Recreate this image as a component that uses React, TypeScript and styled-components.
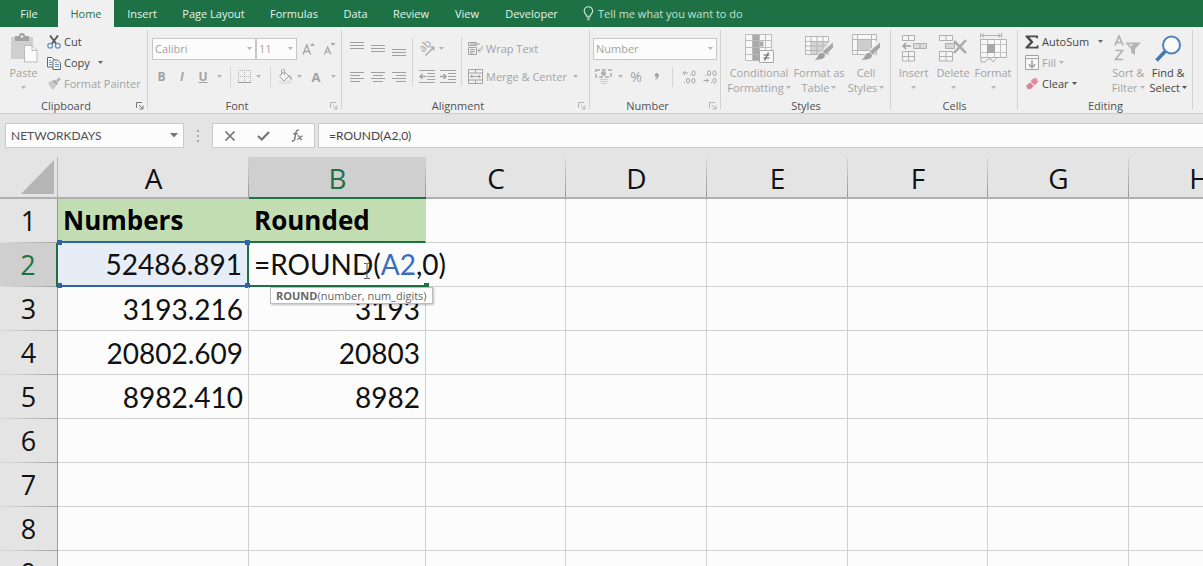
import React from "react";
import styled, { createGlobalStyle, css } from "styled-components";

const UI_FONT = '"Open Sans", "Noto Sans", sans-serif';
const CELL_FONT = 'Lato, "Open Sans", sans-serif';
const GREEN = "#1e7145";
const DIM = "#a3a3a3";
const INK = "#444444";
const LINE = "#d0d0d0";

const GlobalStyle = createGlobalStyle`
  * { box-sizing: border-box; }
  html, body { margin: 0; height: 100%; }
  body { overflow: hidden; background: #fcfcfc; font-family: ${UI_FONT}; font-size: 11px; color: ${INK}; }
  button, input, select { font: inherit; color: inherit; }
  button { border: 0; padding: 0; background: none; }
  svg { display: block; flex: none; }
`;

const Window = styled.div`
  display: flex;
  flex-direction: column;
  height: 100vh;
  overflow: hidden;
`;

/* ---------- tab strip ---------- */

const TabStrip = styled.nav`
  display: flex;
  align-items: stretch;
  flex: none;
  height: 27px;
  background: ${GREEN};
  color: #e4f3ea;
`;

const Tab = styled.button<{ $width: number; $active?: boolean }>`
  flex: none;
  width: ${(p) => p.$width}px;
  line-height: 26px;
  white-space: nowrap;
  ${(p) =>
    p.$active &&
    css`
      background: #f0f0f0;
      color: ${GREEN};
    `}
`;

const TellMe = styled.button`
  display: flex;
  align-items: center;
  gap: 4px;
  padding-left: 12px;
  line-height: 26px;
  color: #c4e2d0;
  white-space: nowrap;
`;

/* ---------- ribbon ---------- */

const RibbonBar = styled.div`
  display: flex;
  flex: none;
  background: #f0f0f0;
  border-bottom: 1px solid #cfcfcf;
`;

const Group = styled.section<{ $width: number }>`
  position: relative;
  display: flex;
  flex-direction: column;
  flex: none;
  width: ${(p) => p.$width}px;
  padding-top: 4px;
  &::after {
    content: "";
    position: absolute;
    right: 0;
    top: 3px;
    bottom: 4px;
    width: 1px;
    background: #d2d2d2;
  }
`;

const GroupBody = styled.div<{ $left: number; $gap?: number }>`
  display: flex;
  align-items: flex-start;
  gap: ${(p) => p.$gap ?? 0}px;
  height: 67px;
  padding-left: ${(p) => p.$left}px;
`;

const GroupFooter = styled.div`
  display: flex;
  align-items: center;
  height: 15px;
  line-height: 15px;
  text-align: center;
  color: #505050;
`;

const Launcher = styled.button<{ $dim?: boolean }>`
  flex: none;
  width: 16px;
  padding-left: 4px;
  color: ${(p) => (p.$dim ? "#b4b4b4" : "#777")};
`;

const FooterName = styled.span`
  flex: 1;
`;

const BigButton = styled.button<{ $width: number; $live?: boolean }>`
  display: flex;
  flex-direction: column;
  align-items: center;
  flex: none;
  width: ${(p) => p.$width}px;
  line-height: 15px;
  white-space: nowrap;
  color: ${(p) => (p.$live ? INK : DIM)};
`;

const BigIcon = styled.span`
  display: flex;
  align-items: center;
  justify-content: center;
  height: 34px;
`;

const BigLine = styled.span`
  display: flex;
  align-items: center;
  justify-content: center;
  gap: 2px;
  height: 15px;
`;

const Stack = styled.div`
  display: flex;
  flex-direction: column;
  flex: none;
`;

const RowButton = styled.button<{ $live?: boolean }>`
  display: flex;
  align-items: center;
  gap: 3px;
  height: 21px;
  white-space: nowrap;
  color: ${(p) => (p.$live ? INK : DIM)};
`;

const ToolRows = styled.div<{ $left?: number }>`
  display: flex;
  flex-direction: column;
  gap: 7px;
  padding: 7px 0 0 ${(p) => p.$left ?? 0}px;
`;

const ToolRow = styled.div`
  display: flex;
  align-items: center;
  height: 21px;
`;

const Tool = styled.button<{ $width?: number; $bold?: boolean; $italic?: boolean; $under?: boolean; $size?: number }>`
  display: flex;
  align-items: center;
  justify-content: center;
  flex: none;
  width: ${(p) => p.$width ?? 21}px;
  height: 21px;
  color: ${DIM};
  font-size: ${(p) => p.$size ?? 12}px;
  font-weight: ${(p) => (p.$bold ? 700 : 400)};
  font-style: ${(p) => (p.$italic ? "italic" : "normal")};
  text-decoration: ${(p) => (p.$under ? "underline" : "none")};
`;

const RowDivider = styled.span<{ $tall?: boolean }>`
  flex: none;
  width: 1px;
  height: ${(p) => (p.$tall ? 49 : 20)}px;
  margin: ${(p) => (p.$tall ? "6px 3px 0" : "0 6px 0 5px")};
  background: #d6d6d6;
`;

const SelectFrame = styled.label<{ $width: number }>`
  position: relative;
  display: block;
  flex: none;
  width: ${(p) => p.$width}px;
  height: 22px;
  color: ${DIM};
  select {
    width: 100%;
    height: 22px;
    padding: 0 2px;
    border: 1px solid #c6c6c6;
    border-radius: 0;
    background: #fcfcfc;
    appearance: none;
  }
  svg {
    position: absolute;
    right: 4px;
    top: 9px;
  }
`;

/* ---------- formula bar ---------- */

const FormulaBar = styled.div`
  display: flex;
  align-items: center;
  flex: none;
  height: 43px;
  padding-left: 5px;
  background: #e4e4e4;
  font-family: ${CELL_FONT};
  font-size: 12px;
`;

const NameBox = styled.div`
  display: flex;
  align-items: center;
  width: 179px;
  height: 25px;
  padding-right: 5px;
  border: 1px solid #cacaca;
  background: #fcfcfc;
  color: #505050;
  input {
    flex: 1;
    min-width: 0;
    padding: 0 0 0 5px;
    border: 0;
    background: none;
    outline: none;
  }
`;

const Grip = styled.span`
  display: flex;
  justify-content: center;
  width: 28px;
`;

const EntryButtons = styled.div`
  display: flex;
  align-items: center;
  justify-content: space-around;
  width: 103px;
  height: 25px;
  margin-right: 3px;
  border: 1px solid #cacaca;
  background: #fcfcfc;
  color: #777;
`;

const FormulaInput = styled.input`
  flex: 1;
  min-width: 0;
  height: 25px;
  padding: 0 10px;
  border: 1px solid #cacaca;
  border-right: 0;
  background: #fcfcfc;
  outline: none;
`;

/* ---------- sheet ---------- */

const SheetArea = styled.main`
  flex: 1;
  min-height: 0;
  overflow: hidden;
`;

const Grid = styled.table`
  width: 100%;
  table-layout: fixed;
  border-collapse: separate;
  border-spacing: 0;
  font-family: ${CELL_FONT};
  font-size: 28px;
  line-height: 36px;
  color: #111;
`;

const Corner = styled.td`
  width: 58px;
  height: 42px;
  padding: 0 0 0 21px;
  border-bottom: 2px solid #b0b0b0;
  border-right: 1px solid #b5b5b5;
  background: #e4e4e4;
`;

const ColumnHead = styled.th<{ $width: number; $active?: boolean }>`
  width: ${(p) => p.$width}px;
  height: 42px;
  padding: 2px 0 0;
  border-bottom: 2px solid ${(p) => (p.$active ? GREEN : "#b0b0b0")};
  background: linear-gradient(to bottom, #dadada, #959595) right / 1px 100% no-repeat
    ${(p) => (p.$active ? "#cfcfcf" : "#e4e4e4")};
  color: ${(p) => (p.$active ? GREEN : "#111")};
  font-family: ${UI_FONT};
  font-weight: 400;
`;

const RowHead = styled.th<{ $active?: boolean }>`
  height: 44px;
  padding: 0;
  border-right: ${(p) => (p.$active ? `2px solid ${GREEN}` : "1px solid #9a9a9a")};
  background: linear-gradient(to right, #dcdcdc, #a4a4a4) bottom / 100% 1px no-repeat
    ${(p) => (p.$active ? "#cfcfcf" : "#e4e4e4")};
  color: ${(p) => (p.$active ? GREEN : "#111")};
  font-family: ${UI_FONT};
  font-size: 27px;
  font-weight: 400;
`;

type CellKind = "plain" | "heading" | "referenced" | "editing";

const Cell = styled.td<{ $kind: CellKind; $edge?: string }>`
  position: relative;
  height: 44px;
  padding: 0 5px;
  border-right: 1px solid ${LINE};
  border-bottom: 1px solid ${LINE};
  text-align: right;
  white-space: nowrap;
  ${(p) =>
    p.$kind === "heading" &&
    css`
      background: #c3ddb3;
      border-right-color: #c3ddb3;
      border-bottom: 2px solid ${p.$edge};
      text-align: left;
      font-family: ${UI_FONT};
      font-size: 26px;
      font-weight: 700;
      color: #000;
    `}
  ${(p) =>
    p.$kind === "referenced" &&
    css`
      background: #e6edf7;
      border-right: 2px solid ${GREEN};
      border-bottom: 2px solid #2f62a8;
    `}
  ${(p) =>
    p.$kind === "editing" &&
    css`
      z-index: 2;
      border-right: 0;
      border-bottom: 2px solid ${GREEN};
      text-align: left;
    `}
`;

const Reference = styled.span`
  color: #3a6cc0;
`;

const Handle = styled.span<{ $corner: "tl" | "tr" | "bl" | "br"; $green?: boolean }>`
  position: absolute;
  width: 5px;
  height: 5px;
  background: ${(p) => (p.$green ? GREEN : "#2f62a8")};
  ${(p) => (p.$corner[0] === "t" ? "top: -3px;" : "bottom: -3px;")}
  ${(p) => (p.$corner[1] === "l" ? "left: -1px;" : "right: -3px;")}
`;

const FunctionHint = styled.div`
  position: absolute;
  left: 21px;
  top: 44px;
  padding: 0 5px;
  border: 1px solid #bdbdbd;
  background: #fff;
  box-shadow: 1px 1px 2px rgba(0, 0, 0, 0.25);
  font-family: ${UI_FONT};
  font-size: 11px;
  line-height: 15px;
  color: #666;
`;

const Pointer = styled.svg`
  position: absolute;
  left: 114px;
  top: 20px;
`;

/* ---------- drawings ---------- */

const Caret = ({ color = "#b4b4b4" }: { color?: string }) => (
  <svg width="5" height="3" viewBox="0 0 5 3">
    <path d="M0 0h5L2.5 3z" fill={color} />
  </svg>
);

const Lines = ({ rows, top = 0 }: { rows: [number, number][]; top?: number }) => (
  <svg width="14" height="16" viewBox="0 0 14 16">
    {rows.map(([x, w], i) => (
      <rect key={i} x={x} y={top + i * 3} width={w} height="1" fill="#a0a0a0" />
    ))}
  </svg>
);

const BulbIcon = () => (
  <svg width="11" height="15" viewBox="0 0 11 15" fill="none" stroke="#d5ebdd" strokeWidth="1.1">
    <path d="M3.6 10.2C3.6 8.4 1.2 7.6 1.2 4.9a4.2 4.2 0 0 1 8.4 0c0 2.7-2.4 3.5-2.4 5.3z" />
    <path d="M3.8 12h3.2M4.3 13.8h2.2" />
  </svg>
);

const PasteIcon = () => (
  <svg width="28" height="30" viewBox="0 0 28 30">
    <path d="M1 4h22v22H1z" fill="#cfcfd0" />
    <path d="M5 3h4a3 3 0 0 1 6 0h4v5H5z" fill="#a2a2a2" />
    <circle cx="12" cy="3.5" r="1.3" fill="#f0f0f0" />
    <path d="M14.5 12.5h7.5l5 5v11.5H14.5z" fill="#fbfbfb" stroke="#bcbcbc" />
    <path d="M22 12.5v5h5" fill="none" stroke="#bcbcbc" />
  </svg>
);

const CutIcon = () => (
  <svg width="14" height="14" viewBox="0 0 14 14" fill="none">
    <path d="M3 0.5 9.3 9M11 0.5 4.7 9" stroke="#5c5c5c" strokeWidth="2" />
    <circle cx="3.2" cy="10.7" r="2.4" stroke="#5f95c6" strokeWidth="1.3" />
    <circle cx="10.8" cy="10.7" r="2.4" stroke="#5f95c6" strokeWidth="1.3" />
  </svg>
);

const CopyIcon = () => (
  <svg width="14" height="14" viewBox="0 0 14 14" fill="#fafafa" stroke="#666">
    <path d="M0.5 1.5h4.5l2 2v7.5H0.5z" />
    <path d="M2 4.5h2M2 6.5h3M2 8.5h3" stroke="#6b98c4" />
    <path d="M6 4h4.5l3 3v6.5H6z" />
    <path d="M8 8.5h4M8 10.5h4M8 6.5h2" stroke="#6b98c4" />
  </svg>
);

const PainterIcon = () => (
  <svg width="14" height="14" viewBox="0 0 14 14">
    <path d="M1 5.5 5 3.5l4.5 5L6.5 12.5 4 11.5z" fill="#c9c9c9" />
    <path d="m5.5 4 2-1.5L11 6.5 9.5 8z" fill="#a5a5a5" />
    <path d="m9 3.5 3-3 1.7 1.8-3.1 3z" fill="#b0b0b0" />
  </svg>
);

const LauncherIcon = () => (
  <svg width="8" height="8" viewBox="0 0 8 8" fill="none" stroke="currentColor">
    <path d="M0.5 6V0.5H6M3 3l3.5 3.5M7 3.5V7H3.5" />
  </svg>
);

const GrowFontIcon = ({ down }: { down?: boolean }) => (
  <svg width="14" height="14" viewBox="0 0 14 14" fill="none" stroke="#a3a3a3">
    {down ? (
      <>
        <path d="m1.5 12.5 3.2-7.5 3.2 7.5M2.6 10h4.2" strokeWidth="1.2" />
        <path d="M7.5 1h5L10 3.8z" fill="#a3a3a3" stroke="none" />
      </>
    ) : (
      <>
        <path d="m1 12.5 3.8-9.5 3.8 9.5M2.3 9.5h5" strokeWidth="1.3" />
        <path d="M8 3.8h5L10.5 1z" fill="#a3a3a3" stroke="none" />
      </>
    )}
  </svg>
);

const BordersIcon = () => (
  <svg width="13" height="13" viewBox="0 0 13 13" fill="none" stroke="#b0b0b0">
    <path d="M0.5 0v12M12.5 0v12M6.5 0v12M0 0.5h13M0 6.5h13" strokeDasharray="1 1" />
    <path d="M0 12.5h13" stroke="#999" />
  </svg>
);

const FillColorIcon = () => (
  <svg width="15" height="15" viewBox="0 0 15 15">
    <path d="M1 11.5h12V15H1z" fill="#e2e2e2" />
    <path d="m6 2.5 5 4.5-5 5-4.5-4.5z" fill="#f4f4f4" stroke="#a3a3a3" />
    <path d="M6.5 6V1.5a1.5 1.5 0 0 0-3 0V5" fill="none" stroke="#a3a3a3" />
    <path d="M11 6c2.5 1 3 3 2.5 5-1-.5-2-2-2.5-5z" fill="#a0a0a0" />
  </svg>
);

const OrientationIcon = () => (
  <svg width="16" height="16" viewBox="0 0 16 16" fill="none" stroke="#a3a3a3">
    <text x="0" y="0" transform="translate(4 12) rotate(-45)" fontSize="11" fill="#a3a3a3" stroke="none">
      ab
    </text>
    <path d="m6.5 14.500 8-8M11 6h3.800v3.800" strokeWidth="1.200" />
  </svg>
);

const IndentIcon = ({ right }: { right?: boolean }) => (
  <svg width="16" height="13" viewBox="0 0 16 13" fill="none" stroke="#a3a3a3">
    <path d="M0 0.5h16M8 3.5h8M8 6.5h8M8 9.5h8M0 12.5h16" />
    <path d={right ? "M0 6.5h6M3.5 4 6 6.5 3.5 9" : "M7 6.5H1M3.5 4 1 6.5 3.5 9"} strokeWidth="1.5" />
  </svg>
);

const WrapIcon = () => (
  <svg width="15" height="15" viewBox="0 0 15 15" fill="none" stroke="#a3a3a3">
    <path d="M0.5 1v3.5h8M0.5 1.5h8v3M2 3h10M0.5 6.5h8v7h-8zM2 8.5h5M2 10.5h5M2 12h3" />
    <path d="M14 5v2.5c0 1.5-1 2-4 2M12 7.5 10 9.5l2 2" />
  </svg>
);

const MergeIcon = () => (
  <svg width="15" height="15" viewBox="0 0 15 15" fill="none" stroke="#a3a3a3">
    <path d="M0.5 0.5h14v14H0.5zM0.5 4h14M0.5 11h14M7.5 0.5V4M7.5 11v3.5M2.5 7.5h10M4.5 5.8 2.5 7.5l2 1.7M10.5 5.8l2 1.7-2 1.7" />
  </svg>
);

const CurrencyIcon = () => (
  <svg width="17" height="15" viewBox="0 0 17 15" fill="none" stroke="#ababab">
    <path d="M1 1h15v7H1z" strokeDasharray="4 2" strokeWidth="1.5" />
    <circle cx="8.5" cy="4.5" r="2" fill="#b5b5b5" />
    <path d="M5 10.5h8M5 12.5h8M6 14.5h6" stroke="#cdcdcd" />
  </svg>
);

const DecimalIcon = ({ less }: { less?: boolean }) => (
  <svg width="15" height="14" viewBox="0 0 15 14" fill="none" stroke="#a3a3a3">
    {less ? (
      <>
        <rect x="4.5" y="1" width="3" height="4.5" rx="1.5" />
        <rect x="10" y="1" width="3" height="4.5" rx="1.5" />
        <rect x="10" y="8.5" width="3" height="4.5" rx="1.5" />
        <path d="M0.5 10.5h5M3.5 8.5l2 2-2 2M2 5.5h1M8 12.5h1" />
      </>
    ) : (
      <>
        <rect x="10" y="1" width="3" height="4.5" rx="1.5" />
        <rect x="4.5" y="8.5" width="3" height="4.5" rx="1.5" />
        <rect x="10" y="8.5" width="3" height="4.5" rx="1.5" />
        <path d="M6 3H1M3 1 1 3l2 2M8 5.5h1M2 12.5h1" />
      </>
    )}
  </svg>
);

const Brush = () => (
  <>
    <path d="m27.5 9-9 11" stroke="#f0f0f0" strokeWidth="6" />
    <path d="M28 8.5v5L20.5 21 17 18z" fill="#a6a6a6" />
    <path d="M17 18.5c2 0 3.5 1.5 3.5 3.5-1.5 4-6.5 4.5-12.5 4 3-1 4-3 5-5 .8-1.5 2-2.5 4-2.5z" fill="#a0a0a0" stroke="#f0f0f0" />
  </>
);

const ConditionalIcon = () => (
  <svg width="29" height="29" viewBox="0 0 29 29" fill="none">
    <path d="M0.5 0.5h26v26h-26z" fill="#f8f8f8" />
    <path d="M8 1h6v25H8zM14 7.5h4.5v5H14z" fill="#a9a9a9" />
    <path d="M0.5 0.5h26v26h-26zM0.5 6.5h26M0.5 13.5h26M0.5 20.5h26M7.5 0v26M14.5 0v26M20.5 0v26" stroke="#bcbcbc" />
    <path d="M14.5 16.5h14v12h-14z" fill="#f8f8f8" stroke="#a8a8a8" />
    <path d="M18.5 21h6M18.5 24h6M23.5 18.5l-4 8" stroke="#666" strokeWidth="1.2" />
  </svg>
);

const FormatTableIcon = () => (
  <svg width="29" height="29" viewBox="0 0 29 29" fill="none">
    <path d="M0.5 2.5h23v18h-23z" fill="#f8f8f8" />
    <path d="M6 8h17v12H6z" fill="#d4d4d4" />
    <path d="M0.5 2.5h23v18h-23zM0.5 7.5h23M0.5 12h23M0.5 16.5h23M6 2.5v18M12 2.5v18M18 2.5v18" stroke="#b6b6b6" />
    <Brush />
  </svg>
);

const CellStylesIcon = () => (
  <svg width="29" height="29" viewBox="0 0 29 29" fill="none">
    <path d="M0.5 0.5h24v20h-24z" fill="#f8f8f8" stroke="#b6b6b6" />
    <path d="M0.5 5.5h24M0.5 16.5h24M5.5 0.5v20M19.5 0.5v20" stroke="#b6b6b6" />
    <path d="M6 6h13v10H6z" fill="#cecece" />
    <Brush />
  </svg>
);

const InsertIcon = () => (
  <svg width="26" height="27" viewBox="0 0 26 27" fill="#f5f5f5" stroke="#b0b0b0">
    <path d="M1.5 0.5h12v5h-12zM7.5 0.5v5" />
    <path d="M12.5 8.5h13v5h-13zM19 8.5v5" fill="#dadada" />
    <path d="M10 11H2M5 8l-3 3 3 3" fill="none" stroke="#9f9f9f" strokeWidth="1.5" />
    <path d="M1.5 16.5h12v9.5h-12zM7.5 16.5v9.5M1.5 21.5h12" />
  </svg>
);

const DeleteIcon = () => (
  <svg width="28" height="27" viewBox="0 0 28 27" fill="#f5f5f5" stroke="#b0b0b0">
    <path d="M0.5 0.5h13v5h-13zM7 0.5v5M0.5 16.5h13v9.5h-13zM7 16.5v9.5M0.5 21.5h13" />
    <path d="M6.5 8.5h9v5h-9z" fill="#d5d5d5" />
    <path d="M15 6l12 12M27 5 15 18" fill="none" stroke="#ababab" strokeWidth="2.5" />
  </svg>
);

const FormatIcon = () => (
  <svg width="27" height="30" viewBox="0 0 27 30" fill="none" stroke="#b0b0b0">
    <path d="M0.5 0v5M21.5 0v5M1.5 2.5h19M4 0.5l-2.5 2 2.5 2M18 0.5l2.5 2-2.5 2" />
    <path d="M0.5 6.5h26v18h-26z" fill="#f7f7f7" />
    <path d="M0.5 11.5h26M0.5 19.5h26M7.5 6.5v18M14.5 6.5v18M20.5 6.5v18" stroke="#c2c2c2" />
    <path d="M7 11h8v9H7z" fill="#a6a6a6" stroke="none" />
    <path d="M1 25v4h4l3-3h3l2 3 4-4" />
  </svg>
);

const SigmaIcon = () => (
  <svg width="14" height="14" viewBox="0 0 14 14">
    <path d="M0.5 0.5h12.5v3h-1.2l-.8-1.3H4.5L8.5 7l-4.5 4.8h7.3l.9-1.6h1.3V13.5H0.5v-1.4L5.3 7 0.5 1.8z" fill="#4a4a4a" />
  </svg>
);

const FillDownIcon = () => (
  <svg width="14" height="15" viewBox="0 0 14 15" fill="none" stroke="#a3a3a3">
    <path d="M0.5 0.5h13v14H0.5z" fill="#f7f7f7" />
    <path d="M0.5 3.5h13" />
    <path d="M7 5v7.5M3.8 9.3 7 12.5l3.2-3.2" strokeWidth="1.6" />
  </svg>
);

const EraserIcon = () => (
  <svg width="14" height="14" viewBox="0 0 14 14">
    <path d="M8 1.5 11.5 1 13 5 9.5 8.5 5.5 4.5z" fill="#e58a9e" />
    <path d="m5 5 4 4-3.5 3.5L2 12 1 8.5z" fill="#dc8196" stroke="#f0f0f0" strokeWidth="0.6" />
  </svg>
);

const SortIcon = () => (
  <svg width="28" height="26" viewBox="0 0 28 26" fill="none" stroke="#b2b2b2" strokeWidth="1.7">
    <path d="m1 10.5 4-9.5 4 9.5M2.5 7.5h5M1.5 15.5h7L1.5 24.5h7.5" />
    <path d="M11 7.5h16l-6 6.5V20l-4-2.5V14z" fill="#b5b5b5" stroke="none" />
    <path d="M14.5 9h5l-3 3z" fill="#dedede" stroke="none" />
  </svg>
);

const FindIcon = () => (
  <svg width="27" height="27" viewBox="0 0 27 27" fill="none">
    <path d="M1.5 25.5 10.5 16" stroke="#4778ae" strokeWidth="3.5" />
    <circle cx="16.5" cy="10" r="8.5" fill="#fafafa" stroke="#4e83bb" strokeWidth="2" />
  </svg>
);

/* ---------- ribbon pieces ---------- */

const RibbonGroup = ({
  name,
  width,
  left,
  gap,
  launcher,
  children,
}: {
  name: string;
  width: number;
  left: number;
  gap?: number;
  launcher?: "live" | "dim";
  children: React.ReactNode;
}) => (
  <Group $width={width} aria-label={name}>
    <GroupBody $left={left} $gap={gap}>
      {children}
    </GroupBody>
    <GroupFooter>
      <FooterName>{name}</FooterName>
      {launcher && (
        <Launcher $dim={launcher === "dim"} aria-label={`${name} settings`}>
          <LauncherIcon />
        </Launcher>
      )}
    </GroupFooter>
  </Group>
);

const Big = ({
  icon,
  width,
  first,
  second,
  live,
}: {
  icon: React.ReactNode;
  width: number;
  first: string;
  second?: string;
  live?: boolean;
}) => (
  <BigButton $width={width} $live={live}>
    <BigIcon>{icon}</BigIcon>
    <BigLine>{first}</BigLine>
    <BigLine>
      {second}
      <Caret color={live ? "#555" : undefined} />
    </BigLine>
  </BigButton>
);

const Picker = ({ label, value, width }: { label: string; value: string; width: number }) => (
  <SelectFrame $width={width}>
    <select aria-label={label} defaultValue={value}>
      <option>{value}</option>
    </select>
    <Caret />
  </SelectFrame>
);

const TABS: { name: string; width: number }[] = [
  { name: "File", width: 58 },
  { name: "Home", width: 56 },
  { name: "Insert", width: 56 },
  { name: "Page Layout", width: 87 },
  { name: "Formulas", width: 74 },
  { name: "Data", width: 49 },
  { name: "Review", width: 62 },
  { name: "View", width: 50 },
  { name: "Developer", width: 79 },
];

const full: [number, number] = [0, 14];

const Ribbon = () => (
  <RibbonBar>
    <RibbonGroup name="Clipboard" width={148} left={6} gap={6} launcher="live">
      <Big icon={<PasteIcon />} width={35} first="Paste" />
      <Stack>
        <RowButton $live>
          <CutIcon />
          Cut
        </RowButton>
        <RowButton $live>
          <CopyIcon />
          Copy
          <Tool as="span" $width={16}>
            <Caret color="#666" />
          </Tool>
        </RowButton>
        <RowButton>
          <PainterIcon />
          Format Painter
        </RowButton>
      </Stack>
    </RibbonGroup>

    <RibbonGroup name="Font" width={194} left={4} launcher="dim">
      <ToolRows>
        <ToolRow>
          <Picker label="Font" value="Calibri" width={104} />
          <Picker label="Font size" value="11" width={41} />
          <Tool $width={23} aria-label="Increase font size">
            <GrowFontIcon />
          </Tool>
          <Tool $width={20} aria-label="Decrease font size">
            <GrowFontIcon down />
          </Tool>
        </ToolRow>
        <ToolRow>
          <Tool $width={19} $bold>B</Tool>
          <Tool $width={22} $bold $italic>I</Tool>
          <Tool $width={20} $bold $under>U</Tool>
          <Tool $width={12} aria-label="Underline style"><Caret /></Tool>
          <RowDivider />
          <Tool $width={15} aria-label="Borders"><BordersIcon /></Tool>
          <Tool $width={13} aria-label="Border style"><Caret /></Tool>
          <RowDivider />
          <Tool $width={17} aria-label="Fill color"><FillColorIcon /></Tool>
          <Tool $width={10} aria-label="Fill color choice"><Caret /></Tool>
          <Tool $width={24} $bold $size={13}>A</Tool>
          <Tool $width={10} aria-label="Font color choice"><Caret /></Tool>
        </ToolRow>
      </ToolRows>
    </RibbonGroup>

    <RibbonGroup name="Alignment" width={248} left={4} launcher="dim">
      <ToolRows>
        <ToolRow>
          <Tool aria-label="Top align"><Lines rows={[full, full, full]} top={1} /></Tool>
          <Tool aria-label="Middle align"><Lines rows={[full, full, full]} top={4} /></Tool>
          <Tool aria-label="Bottom align"><Lines rows={[full, full, full]} top={8} /></Tool>
        </ToolRow>
        <ToolRow>
          <Tool aria-label="Align left"><Lines rows={[full, [0, 10], full, [0, 10]]} top={3} /></Tool>
          <Tool aria-label="Center"><Lines rows={[full, [2, 10], full, [2, 10]]} top={3} /></Tool>
          <Tool aria-label="Align right"><Lines rows={[full, [4, 10], full, [4, 10]]} top={3} /></Tool>
        </ToolRow>
      </ToolRows>
      <RowDivider $tall />
      <ToolRows>
        <ToolRow>
          <Tool aria-label="Orientation"><OrientationIcon /></Tool>
          <Tool $width={8} aria-label="Orientation choice"><Caret /></Tool>
        </ToolRow>
        <ToolRow>
          <Tool aria-label="Decrease indent"><IndentIcon /></Tool>
          <Tool aria-label="Increase indent"><IndentIcon right /></Tool>
        </ToolRow>
      </ToolRows>
      <RowDivider $tall />
      <ToolRows $left={3}>
        <RowButton>
          <WrapIcon />
          Wrap Text
        </RowButton>
        <RowButton>
          <MergeIcon />
          Merge &amp; Center
          <Tool as="span" $width={12}>
            <Caret />
          </Tool>
        </RowButton>
      </ToolRows>
    </RibbonGroup>

    <RibbonGroup name="Number" width={131} left={3} launcher="dim">
      <ToolRows>
        <ToolRow>
          <Picker label="Number format" value="Number" width={124} />
        </ToolRow>
        <ToolRow>
          <Tool aria-label="Accounting format"><CurrencyIcon /></Tool>
          <Tool $width={12} aria-label="Currency choice"><Caret /></Tool>
          <Tool $width={20} $size={14}>%</Tool>
          <Tool aria-label="Comma style">
            <svg width="5" height="7" viewBox="0 0 5 7">
              <path d="M4.800 2.300c0 2-1.300 3.800-3.300 4.500l-.4-.7c1-.5 1.600-1.200 1.700-2A2 2 0 1 1 4.800 2.300z" fill={DIM} />
            </svg>
          </Tool>
          <RowDivider />
          <Tool aria-label="Increase decimal"><DecimalIcon /></Tool>
          <Tool aria-label="Decrease decimal"><DecimalIcon less /></Tool>
        </ToolRow>
      </ToolRows>
    </RibbonGroup>

    <RibbonGroup name="Styles" width={170} left={5}>
      <Big icon={<ConditionalIcon />} width={66} first="Conditional" second="Formatting" />
      <Big icon={<FormatTableIcon />} width={54} first="Format as" second="Table" />
      <Big icon={<CellStylesIcon />} width={40} first="Cell" second="Styles" />
    </RibbonGroup>

    <RibbonGroup name="Cells" width={127} left={3}>
      <Big icon={<InsertIcon />} width={39} first="Insert" />
      <Big icon={<DeleteIcon />} width={40} first="Delete" />
      <Big icon={<FormatIcon />} width={40} first="Format" />
    </RibbonGroup>

    <RibbonGroup name="Editing" width={175} left={7}>
      <Stack>
        <RowButton $live>
          <SigmaIcon />
          AutoSum
          <Tool as="span" $width={16}>
            <Caret color="#666" />
          </Tool>
        </RowButton>
        <RowButton>
          <FillDownIcon />
          Fill
          <Caret />
        </RowButton>
        <RowButton $live>
          <EraserIcon />
          Clear
          <Caret color="#555" />
        </RowButton>
      </Stack>
      <Big icon={<SortIcon />} width={40} first={"Sort &"} second="Filter" />
      <Big icon={<FindIcon />} width={40} first={"Find &"} second="Select" live />
    </RibbonGroup>
  </RibbonBar>
);

/* ---------- worksheet data ---------- */

const COLUMNS: { name: string; width: number }[] = [
  { name: "A", width: 191 },
  { name: "B", width: 177 },
  { name: "C", width: 140 },
  { name: "D", width: 141 },
  { name: "E", width: 141 },
  { name: "F", width: 140 },
  { name: "G", width: 141 },
  { name: "H", width: 141 },
];

const VALUES: Record<string, string> = {
  A1: "Numbers",
  B1: "Rounded",
  A2: "52486.891",
  A3: "3193.216",
  B3: "3193",
  A4: "20802.609",
  B4: "20803",
  A5: "8982.410",
  B5: "8982",
};

const ROWS = [1, 2, 3, 4, 5, 6, 7, 8, 9];

const SheetCell = ({ id }: { id: string }) => {
  if (id === "A1" || id === "B1")
    return (
      <Cell $kind="heading" $edge={id === "A1" ? "#2f62a8" : GREEN}>
        {VALUES[id]}
      </Cell>
    );
  if (id === "A2")
    return (
      <Cell $kind="referenced">
        {VALUES[id]}
        <Handle $corner="tl" />
        <Handle $corner="tr" />
        <Handle $corner="bl" />
        <Handle $corner="br" />
      </Cell>
    );
  if (id === "B2")
    return (
      <Cell $kind="editing">
        =ROUND(<Reference>A2</Reference>,0)
        <Handle $corner="br" $green />
        <FunctionHint role="tooltip">
          <b>ROUND</b>(number, num_digits)
        </FunctionHint>
        <Pointer width="8" height="16" viewBox="0 0 8 16" fill="none" stroke="#555">
          <path d="M1 0.5h2.5l.5.5.5-.5H7M4 1v14M1 15.5h2.5l.5-.5.5.5H7" />
        </Pointer>
      </Cell>
    );
  return <Cell $kind="plain">{VALUES[id]}</Cell>;
};

export default function App() {
  return (
    <Window>
      <GlobalStyle />
      <TabStrip>
        {TABS.map((t) => (
          <Tab key={t.name} $width={t.width} $active={t.name === "Home"}>
            {t.name}
          </Tab>
        ))}
        <TellMe>
          <BulbIcon />
          Tell me what you want to do
        </TellMe>
      </TabStrip>
      <Ribbon />
      <FormulaBar>
        <NameBox>
          <input aria-label="Name box" defaultValue="NETWORKDAYS" />
          <button aria-label="Show names">
            <svg width="8" height="5" viewBox="0 0 8 5">
              <path d="M0 0h8L4 4.5z" fill="#777" />
            </svg>
          </button>
        </NameBox>
        <Grip>
          <svg width="2" height="12" viewBox="0 0 2 12">
            <path d="M0 0h2v2H0zM0 5h2v2H0zM0 10h2v2H0z" fill="#aaa" />
          </svg>
        </Grip>
        <EntryButtons>
          <button aria-label="Cancel">
            <svg width="12" height="10" viewBox="0 0 12 10" fill="none" stroke="currentColor" strokeWidth="1.7">
              <path d="M1.5 0.5l9 9M10.5 0.5l-9 9" />
            </svg>
          </button>
          <button aria-label="Enter">
            <svg width="13" height="10" viewBox="0 0 13 10" fill="none" stroke="currentColor" strokeWidth="2.2">
              <path d="M1 5l3.8 3.5L12 1" />
            </svg>
          </button>
          <button aria-label="Insert function">
            <svg width="12" height="13" viewBox="0 0 12 13" fill="none" stroke="currentColor" strokeWidth="1.4">
              <path d="M8 1.5C6 .5 5.2 1.5 4.8 4L3.8 9.5C3.4 11.8 2.5 12.5.8 11.8M2.3 4.8h4.4" />
              <path d="M6.5 7c1.5-.5 1.8 0 2.2 1.7s1 2 2.3 1.5M11.5 6.8 6.3 10.5" strokeWidth="1.2" />
            </svg>
          </button>
        </EntryButtons>
        <FormulaInput aria-label="Formula" defaultValue="=ROUND(A2,0)" />
      </FormulaBar>
      <SheetArea>
        <Grid>
          <thead>
            <tr>
              <Corner>
                <svg width="33" height="34" viewBox="0 0 33 34">
                  <path d="M33 0v34H0z" fill="#b5b5b5" />
                </svg>
              </Corner>
              {COLUMNS.map((c) => (
                <ColumnHead key={c.name} scope="col" $width={c.width} $active={c.name === "B"}>
                  {c.name}
                </ColumnHead>
              ))}
            </tr>
          </thead>
          <tbody>
            {ROWS.map((r) => (
              <tr key={r}>
                <RowHead scope="row" $active={r === 2}>
                  {r}
                </RowHead>
                {COLUMNS.map((c) => (
                  <SheetCell key={c.name} id={`${c.name}${r}`} />
                ))}
              </tr>
            ))}
          </tbody>
        </Grid>
      </SheetArea>
    </Window>
  );
}
